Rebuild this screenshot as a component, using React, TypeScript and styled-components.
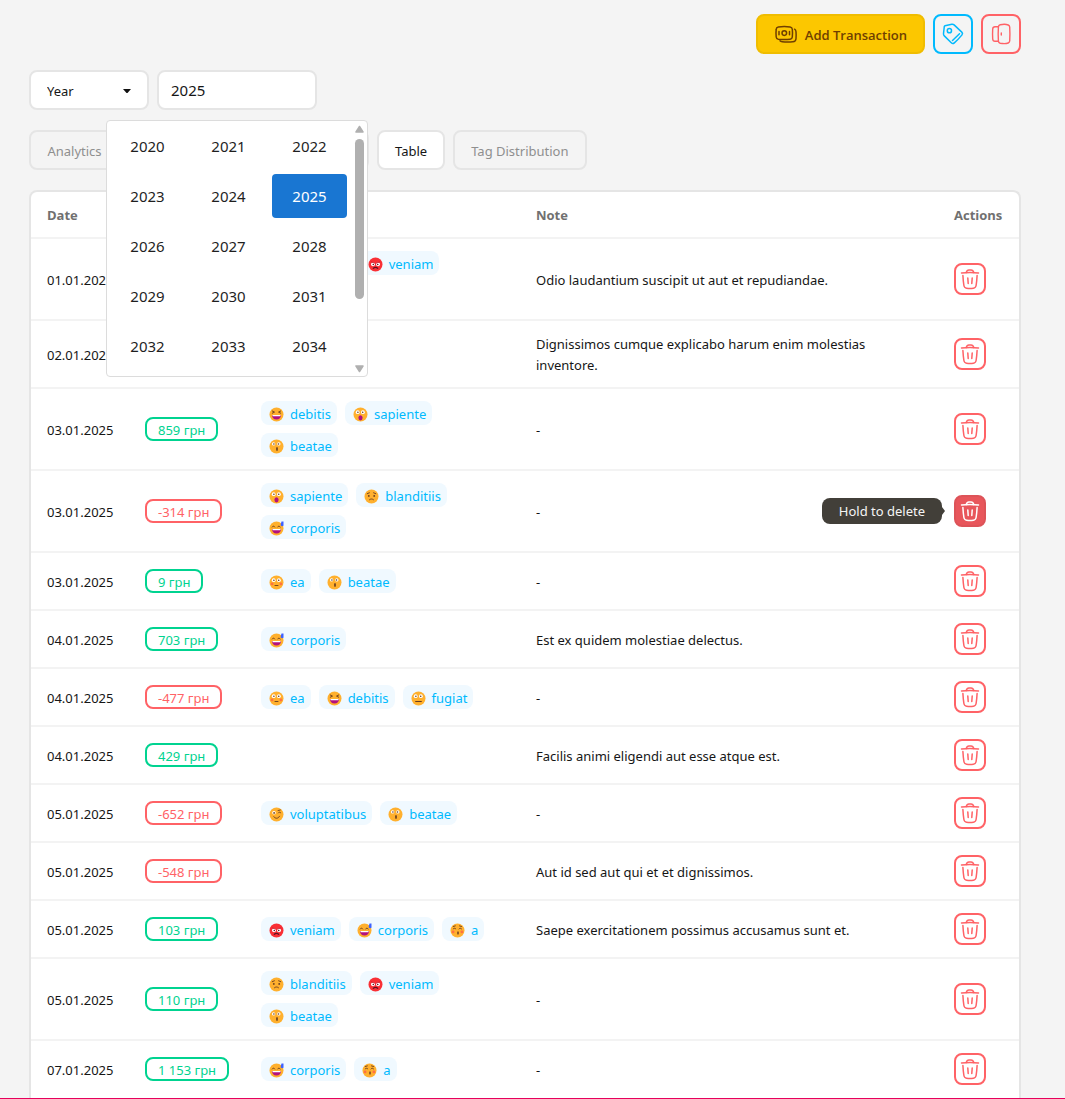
import React, { useState } from "react";
import styled, { createGlobalStyle, css } from "styled-components";

const color = {
  page: "#f4f4f4",
  surface: "#ffffff",
  line: "#e5e5e5",
  rowLine: "#f3f3f3",
  text: "#161616",
  muted: "#8f8f8f",
  heading: "#707070",
  red: "#ff6266",
  green: "#00d390",
  blue: "#00bafe",
  yellow: "#fcc700",
};

const GlobalStyle = createGlobalStyle`
  *, *::before, *::after { box-sizing: border-box; }
  body {
    margin: 0;
    background: ${color.page};
    color: ${color.text};
    font-family: "Noto Sans", "Open Sans", sans-serif;
    font-size: 13px;
    line-height: 21px;
  }
  button, input, select { font: inherit; color: inherit; }
`;

const Page = styled.main`
  display: flex;
  flex-direction: column;
  min-height: 100vh;
  padding: 14px 44px 0 29px;
  border-bottom: 1px solid #e6005c;
`;

const Toolbar = styled.header`
  display: flex;
  justify-content: flex-end;
  gap: 8px;
`;

const buttonBase = css`
  display: inline-flex;
  align-items: center;
  justify-content: center;
  border: 2px solid;
  border-radius: 8px;
  padding: 0;
  cursor: pointer;
`;

const PrimaryButton = styled.button`
  ${buttonBase}
  height: 40px;
  gap: 7px;
  padding: 2px 16px 0;
  background: ${color.yellow};
  border-color: #f0bd00;
  color: #6f3f00;
  font-family: "Open Sans", "Noto Sans", sans-serif;
  font-weight: 600;
`;

const SquareButton = styled.button<{ $tone: string; $size: number }>`
  ${buttonBase}
  width: ${(p) => p.$size}px;
  height: ${(p) => p.$size}px;
  background: transparent;
  border-color: ${(p) => p.$tone};
  color: ${(p) => p.$tone};
`;

const DeleteButton = styled(SquareButton)<{ $active: boolean }>`
  ${(p) =>
    p.$active &&
    css`
      background: #e8565b;
      border-color: #dd5358;
      color: #ffffff;
    `}
`;

const Filters = styled.div`
  display: flex;
  gap: 8px;
  margin-top: 16px;
`;

const SelectBox = styled.div`
  position: relative;
  width: 120px;
  svg {
    position: absolute;
    right: 18px;
    top: 19px;
    pointer-events: none;
  }
`;

const fieldBox = css`
  display: block;
  width: 100%;
  height: 40px;
  border: 2px solid ${color.line};
  border-radius: 8px;
  background: ${color.surface};
  outline: none;
`;

const Select = styled.select`
  ${fieldBox}
  appearance: none;
  padding: 2px 16px 0;
`;

const YearField = styled.div`
  position: relative;
  width: 160px;
`;

const YearInput = styled.input`
  ${fieldBox}
  padding: 0 12px;
  font-size: 15px;
`;

const Popup = styled.div`
  position: absolute;
  z-index: 2;
  top: calc(100% + 10px);
  left: 50%;
  transform: translateX(-50%);
  display: flex;
  justify-content: space-between;
  width: 262px;
  height: 257px;
  border: 1px solid #dcdcdc;
  border-radius: 4px;
  background: ${color.surface};
`;

const YearGrid = styled.div`
  display: grid;
  grid-template-columns: repeat(3, 75px);
  grid-auto-rows: 44px;
  gap: 6px;
  padding: 3px;
`;

const YearCell = styled.button<{ $selected: boolean }>`
  border: 0;
  border-radius: 4px;
  padding: 0;
  font-size: 15px;
  background: ${(p) => (p.$selected ? "#1976d2" : "transparent")};
  color: ${(p) => (p.$selected ? "#ffffff" : "#1f1f1f")};
`;

const ScrollRail = styled.div`
  display: flex;
  flex-direction: column;
  align-items: center;
  width: 15px;
  padding: 4px 0 3px;
`;

const ScrollThumb = styled.div`
  width: 9px;
  height: 160px;
  margin: 6px 0 auto;
  border-radius: 5px;
  background: #b0b0b0;
`;

const Tabs = styled.nav`
  display: flex;
  gap: 8px;
  margin: 20px 0;
`;

const Tab = styled.button<{ $active?: boolean; $width?: number }>`
  ${buttonBase}
  height: 40px;
  padding: 2px 16px 0;
  min-width: ${(p) => (p.$width ? `${p.$width}px` : "0")};
  border-color: ${color.line};
  background: ${(p) => (p.$active ? color.surface : "transparent")};
  color: ${(p) => (p.$active ? color.text : color.muted)};
`;

const Card = styled.section`
  flex: 1;
  border: 2px solid ${color.line};
  border-bottom: 0;
  border-radius: 8px 8px 0 0;
  background: ${color.surface};
`;

const Table = styled.table`
  width: 100%;
  table-layout: fixed;
  border-collapse: separate;
  border-spacing: 0;
  text-align: left;
`;

const Column = styled.col<{ $width?: number }>`
  width: ${(p) => (p.$width ? `${p.$width}px` : "auto")};
`;

const HeadCell = styled.th`
  padding: 13px 16px 11px;
  border-bottom: 2px solid ${color.rowLine};
  color: ${color.heading};
  font-family: "Open Sans", "Noto Sans", sans-serif;
  font-weight: 700;
`;

const Row = styled.tr`
  &:not(:last-child) td {
    border-bottom: 2px solid ${color.rowLine};
  }
`;

const Cell = styled.td<{ $text?: boolean }>`
  padding: ${(p) => (p.$text ? "13px 16px 11px" : "12px 16px")};
  vertical-align: middle;
`;

const NoteText = styled.p`
  margin: 0;
  max-width: 350px;
`;

const Amount = styled.span<{ $negative: boolean }>`
  display: inline-flex;
  align-items: center;
  height: 24px;
  padding: 2px 11px 0;
  border: 2px solid;
  border-radius: 8px;
  white-space: nowrap;
  vertical-align: middle;
  color: ${(p) => (p.$negative ? color.red : color.green)};
`;

const TagList = styled.div`
  display: flex;
  flex-wrap: wrap;
  gap: 8px;
`;

const Tag = styled.span`
  display: inline-flex;
  align-items: center;
  gap: 6px;
  height: 24px;
  padding: 2px 6px 0 8px;
  border-radius: 8px;
  background: #f0f9ff;
  color: ${color.blue};
`;

const ActionSlot = styled.div`
  position: relative;
  display: flex;
  width: 32px;
  height: 32px;
`;

const Tooltip = styled.span`
  position: absolute;
  right: calc(100% + 12px);
  top: 3px;
  padding: 3px 17px 2px;
  border-radius: 8px;
  background: #423f39;
  color: #f5f5f4;
  white-space: nowrap;
  &::after {
    content: "";
    position: absolute;
    left: 100%;
    top: 9px;
    border: 4px solid transparent;
    border-right: 0;
    border-left: 3px solid #423f39;
  }
`;

const stroke = {
  fill: "none",
  stroke: "currentColor",
  strokeLinecap: "round" as const,
  strokeLinejoin: "round" as const,
  "aria-hidden": true,
};

const CashIcon = () => (
  <svg width="24" height="24" viewBox="0 0 24 24" strokeWidth="1.5" {...stroke}>
    <path d="M4.300 4c4-.5 8-.5 11.800 0 1.400.2 2.100.9 2.200 2.200.3 2.700.3 5.200 0 7.800-.1 1.300-.8 2-2.200 2.200-3.800.5-7.800.5-11.800 0-1.300-.2-2-.9-2.100-2.200-.3-2.600-.3-5.100 0-7.800C2.300 4.900 3 4.200 4.300 4Z" />
    <path d="M20.600 6.200c1 .5 1.300 1.300 1.400 2.500.2 2.400.2 4.700 0 7-.2 1.900-1.200 2.900-3.100 3.100-3.500.4-7.200.4-10.700 0-1-.1-1.700-.4-2.200-1" />
    <path d="M5 8.400v3.400M15.500 8.400v3.400" />
    <circle cx="10.300" cy="10.100" r="2.300" />
  </svg>
);

const TagIcon = () => (
  <svg width="24" height="24" viewBox="0 0 24 24" strokeWidth="1.500" {...stroke}>
    <path d="M4 3.700 10.800 2.300c1-.2 1.600 0 2.300.6l7.700 7.200c1 1 1 1.800.2 2.800-2.400 2.900-4.800 5.500-7.700 8-1 .9-2 .9-3-.1l-7-6.900c-.7-.7-.9-1.400-.8-2.300l.8-7.100c.1-.4.300-.7.700-.8Z" />
    <circle cx="8.400" cy="8.700" r="2.100" />
    <path d="m11.500 18.500 7-6.700" />
  </svg>
);

const DoorIcon = () => (
  <svg width="24" height="24" viewBox="0 0 24 24" strokeWidth="1.400" {...stroke}>
    <path d="M11.200 2.800c3.200-.7 6-.6 8 .2 1 .4 1.400.9 1.500 2 .3 4.700.3 9.300 0 14-.1 1.100-.5 1.600-1.500 2-2.100.8-4.800.9-8 .2-1.200-.3-1.700-.9-1.800-2.100-.3-4.700-.3-9.500 0-14.200.1-1.200.6-1.800 1.800-2.100Z" />
    <path d="M9.200 4.800H6C4.500 4.800 3.800 5.500 3.700 7c-.2 3.300-.2 6.600 0 10 .1 1.500.8 2.200 2.300 2.200h3.200" />
    <path d="M12.300 11v2" />
  </svg>
);

const TrashIcon = () => (
  <svg width="20" height="22" viewBox="0 0 20 22" strokeWidth="1.500" {...stroke}>
    <path d="M1.500 5c5.600-.5 11.400-.5 17 0" />
    <path d="M6.200 4.500c.5-1.700 1.300-2.600 2.700-2.600h2.200c1.400 0 2.200.9 2.700 2.600" />
    <path d="M2.900 7.500c.2 3.600.5 7 1 10 .3 1.800 1 2.500 2.700 2.700 2.300.3 4.500.3 6.800 0 1.700-.2 2.400-.9 2.700-2.700.5-3 .8-6.400 1-10" />
    <path d="m7.800 10 .4 5.500M12.200 10l-.4 5.500" />
  </svg>
);

type Face = "laugh" | "shock" | "kiss" | "sad" | "sweat" | "flushed" | "neutral" | "wink" | "angry" | "smooch";

const brown = "#663b20";

const WideEyes = () => (
  <>
    <g fill="#fff">
      <circle cx="4.700" cy="5.200" r="1.900" />
      <circle cx="9.900" cy="5.200" r="1.900" />
    </g>
    <g fill={brown}>
      <circle cx="4.900" cy="5.300" r=".8" />
      <circle cx="9.700" cy="5.300" r=".8" />
    </g>
  </>
);

const Grin = () => <path d="M3 8h9c0 2.600-1.600 4.600-4.500 4.600S3 10.600 3 8Z" fill="#b3127d" />;
const Teeth = () => <path d="M3.300 8h8.400l-.5 1.300H3.800Z" fill="#fff" />;
const Blush = () => (
  <g fill="#ff7043">
    <circle cx="3.100" cy="8.900" r="1.400" />
    <circle cx="11.900" cy="8.900" r="1.400" />
  </g>
);

const features: Record<Face, React.ReactNode> = {
  laugh: (
    <>
      <Grin />
      <Teeth />
      <path d="m3.300 4 2.200 1.100-2.200 1.100M11.700 4 9.500 5.100l2.200 1.100" fill="none" stroke={brown} />
    </>
  ),
  shock: (
    <>
      <WideEyes />
      <ellipse cx="7.500" cy="10.800" rx="2.100" ry="2.600" fill="#b3127d" />
    </>
  ),
  kiss: (
    <>
      <g fill="#fff">
        <circle cx="4.600" cy="4.900" r="1.700" />
        <circle cx="9.800" cy="4.900" r="1.700" />
      </g>
      <g fill={brown}>
        <circle cx="4.900" cy="5" r=".8" />
        <circle cx="9.500" cy="5" r=".8" />
        <ellipse cx="8" cy="10" rx=".9" ry="1.900" />
      </g>
    </>
  ),
  sad: (
    <>
      <path d="m3.200 4.700 2.200-.9M11.800 4.700l-2.200-.9M5.500 10.700c1.200-1 2.800-1 4 0" fill="none" stroke={brown} />
      <circle cx="4.800" cy="6.900" r=".9" fill={brown} />
      <circle cx="10.200" cy="6.900" r=".9" fill={brown} />
    </>
  ),
  sweat: (
    <>
      <Grin />
      <Teeth />
      <path d="M3.200 6c.6-1.200 2-1.200 2.600 0M8.600 6c.6-1.200 2-1.200 2.600 0" fill="none" stroke={brown} />
      <path d="M12.500.5h2v4.300c-1.500.9-3 .3-2.800-1.200Z" fill="#3d62ff" />
    </>
  ),
  flushed: (
    <>
      <Blush />
      <WideEyes />
      <path d="M6 10.500h3" stroke={brown} />
    </>
  ),
  neutral: (
    <>
      <WideEyes />
      <path d="M4.700 10.500h5.600" stroke={brown} strokeWidth="1.200" />
    </>
  ),
  wink: (
    <>
      <circle cx="5" cy="5.800" r="1.800" fill="#fff" />
      <circle cx="5.100" cy="5.900" r=".9" fill={brown} />
      <path d="M9.300 5.900c.6-1 1.700-1 2.500 0M9.100 3.500l2.200-.5M4.800 9.700c1.500 2.200 4.400 2.200 5.700-.4" fill="none" stroke={brown} />
    </>
  ),
  angry: (
    <>
      <g fill="#fff">
        <circle cx="5" cy="7.200" r="2" />
        <circle cx="10" cy="7.200" r="2" />
      </g>
      <path d="M5.300 11.300c1.300-1.200 3.100-1.200 4.400 0" fill="none" stroke="#5d1523" strokeWidth="1.200" />
      <path d="m3.200 5 3.400 1M11.800 5 8.400 6" stroke="#c81e2c" />
      <circle cx="5.300" cy="7.500" r=".8" fill="#5d1523" />
      <circle cx="9.700" cy="7.500" r=".8" fill="#5d1523" />
    </>
  ),
  smooch: (
    <>
      <Blush />
      <path d="M3.200 5.900c.7-.9 1.900-.9 2.600 0M9 5.900c.7-.9 1.900-.9 2.600 0M3.300 3.500l2-.6M9.500 2.900l2 .6" fill="none" stroke={brown} />
      <ellipse cx="8" cy="10" rx=".8" ry="1.800" fill={brown} />
    </>
  ),
};

const Emoji = ({ face }: { face: Face }) => (
  <svg width="15" height="15" viewBox="0 0 15 15" strokeWidth=".9" strokeLinecap="round" aria-hidden>
    <circle cx="7.500" cy="7.500" r="7" fill={face === "angry" ? "#f92f35" : "#ffb02e"} />
    {features[face]}
  </svg>
);

const tagFaces: Record<string, Face> = {
  debitis: "laugh",
  sapiente: "shock",
  beatae: "kiss",
  blanditiis: "sad",
  corporis: "sweat",
  ea: "flushed",
  fugiat: "neutral",
  voluptatibus: "wink",
  veniam: "angry",
  a: "smooch",
};

type Transaction = { date: string; amount: string; tags: string[]; note?: string };

const transactions: Transaction[] = [
  { date: "01.01.2025", amount: "245 грн", tags: ["blanditiis", "veniam", "beatae"], note: "Odio laudantium suscipit ut aut et repudiandae." },
  { date: "02.01.2025", amount: "518 грн", tags: [], note: "Dignissimos cumque explicabo harum enim molestias inventore." },
  { date: "03.01.2025", amount: "859 грн", tags: ["debitis", "sapiente", "beatae"] },
  { date: "03.01.2025", amount: "-314 грн", tags: ["sapiente", "blanditiis", "corporis"] },
  { date: "03.01.2025", amount: "9 грн", tags: ["ea", "beatae"] },
  { date: "04.01.2025", amount: "703 грн", tags: ["corporis"], note: "Est ex quidem molestiae delectus." },
  { date: "04.01.2025", amount: "-477 грн", tags: ["ea", "debitis", "fugiat"] },
  { date: "04.01.2025", amount: "429 грн", tags: [], note: "Facilis animi eligendi aut esse atque est." },
  { date: "05.01.2025", amount: "-652 грн", tags: ["voluptatibus", "beatae"] },
  { date: "05.01.2025", amount: "-548 грн", tags: [], note: "Aut id sed aut qui et et dignissimos." },
  { date: "05.01.2025", amount: "103 грн", tags: ["veniam", "corporis", "a"], note: "Saepe exercitationem possimus accusamus sunt et." },
  { date: "05.01.2025", amount: "110 грн", tags: ["blanditiis", "veniam", "beatae"] },
  { date: "07.01.2025", amount: "1 153 грн", tags: ["corporis", "a"] },
];

const years = Array.from({ length: 15 }, (_, i) => 2020 + i);

const Arrow = ({ down }: { down?: boolean }) => (
  <svg width="9" height="8" viewBox="0 0 9 8" aria-hidden>
    <path
      d={down ? "M1 1h7L4.500 6.500Z" : "M1 7h7L4.500 1.500Z"}
      fill="#b0b0b0"
      stroke="#b0b0b0"
      strokeWidth="1.500"
      strokeLinejoin="round"
    />
  </svg>
);

export default function App() {
  const [year, setYear] = useState(2025);
  const [pressed, setPressed] = useState(3);

  return (
    <>
      <GlobalStyle />
      <Page>
        <Toolbar>
          <PrimaryButton type="button">
            <CashIcon />
            Add Transaction
          </PrimaryButton>
          <SquareButton type="button" aria-label="Tags" $tone={color.blue} $size={40}>
            <TagIcon />
          </SquareButton>
          <SquareButton type="button" aria-label="Log out" $tone={color.red} $size={40}>
            <DoorIcon />
          </SquareButton>
        </Toolbar>

        <Filters>
          <SelectBox>
            <Select aria-label="Period" defaultValue="Year">
              <option>Year</option>
              <option>Month</option>
            </Select>
            <svg width="8" height="4" viewBox="0 0 8 4" aria-hidden>
              <path d="M0 0h8L4.500 4h-1Z" fill="#111" />
            </svg>
          </SelectBox>
          <YearField>
            <YearInput aria-label="Selected year" value={year} readOnly />
            <Popup>
              <YearGrid>
                {years.map((y) => (
                  <YearCell key={y} type="button" $selected={y === year} onClick={() => setYear(y)}>
                    {y}
                  </YearCell>
                ))}
              </YearGrid>
              <ScrollRail>
                <Arrow />
                <ScrollThumb />
                <Arrow down />
              </ScrollRail>
            </Popup>
          </YearField>
        </Filters>

        <Tabs>
          <Tab type="button" $width={91}>Analytics</Tab>
          <Tab type="button" $width={241}>Calendar</Tab>
          <Tab type="button" $active>Table</Tab>
          <Tab type="button">Tag Distribution</Tab>
        </Tabs>

        <Card>
          <Table>
            <colgroup>
              <Column $width={98} />
              <Column $width={116} />
              <Column $width={275} />
              <Column />
              <Column $width={81} />
            </colgroup>
            <thead>
              <tr>
                <HeadCell>Date</HeadCell>
                <HeadCell>Amount</HeadCell>
                <HeadCell>Tags</HeadCell>
                <HeadCell>Note</HeadCell>
                <HeadCell>Actions</HeadCell>
              </tr>
            </thead>
            <tbody>
              {transactions.map((t, i) => (
                <Row key={i}>
                  <Cell $text>{t.date}</Cell>
                  <Cell>
                    <Amount $negative={t.amount.startsWith("-")}>{t.amount}</Amount>
                  </Cell>
                  <Cell>
                    <TagList>
                      {t.tags.map((name) => (
                        <Tag key={name}>
                          <Emoji face={tagFaces[name]} />
                          {name}
                        </Tag>
                      ))}
                    </TagList>
                  </Cell>
                  <Cell $text>
                    <NoteText>{t.note ?? "-"}</NoteText>
                  </Cell>
                  <Cell>
                    <ActionSlot>
                      {pressed === i && <Tooltip role="tooltip">Hold to delete</Tooltip>}
                      <DeleteButton
                        type="button"
                        aria-label="Delete"
                        $tone={color.red}
                        $size={32}
                        $active={pressed === i}
                        onMouseEnter={() => setPressed(i)}
                      >
                        <TrashIcon />
                      </DeleteButton>
                    </ActionSlot>
                  </Cell>
                </Row>
              ))}
            </tbody>
          </Table>
        </Card>
      </Page>
    </>
  );
}
